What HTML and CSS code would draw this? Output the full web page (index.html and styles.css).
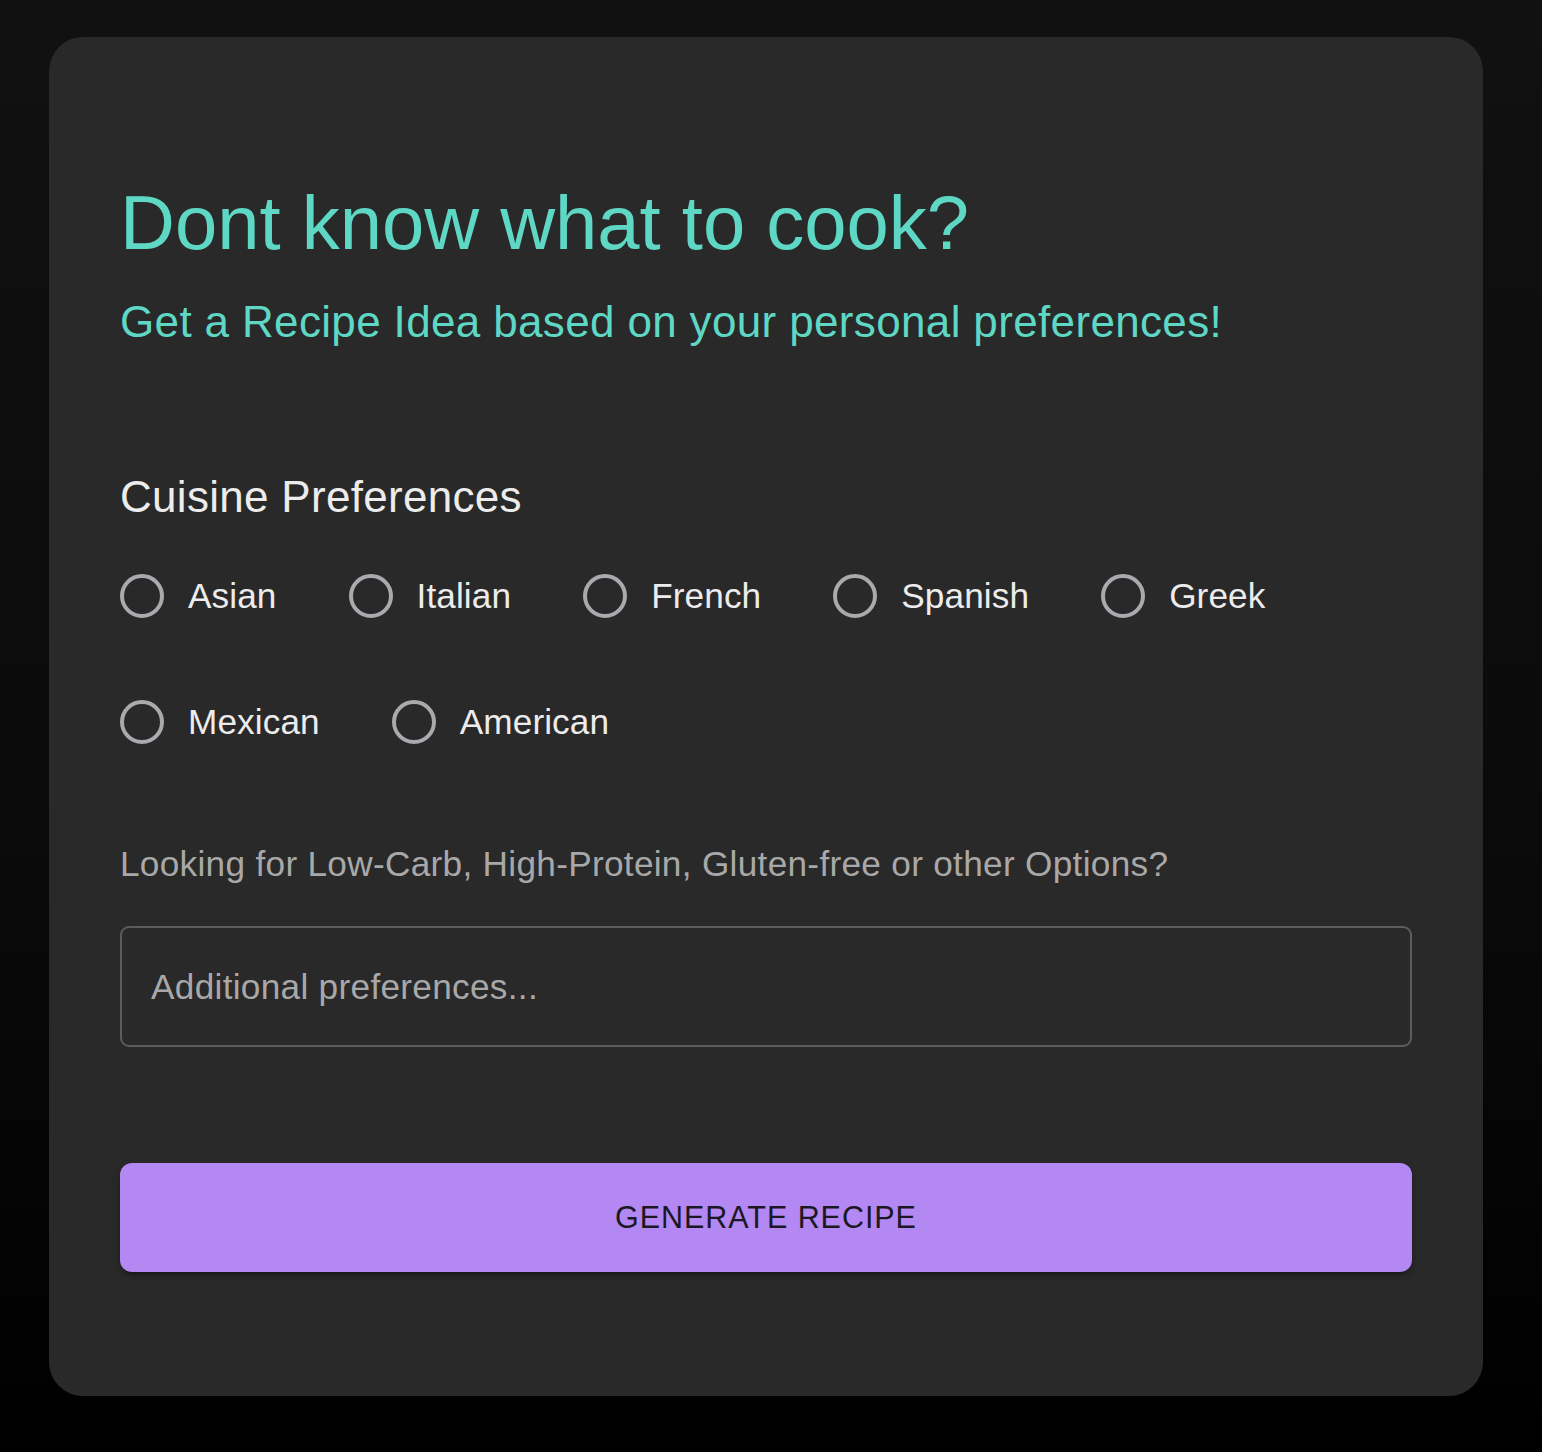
FILE: index.html
```html
<!DOCTYPE html>
<html lang="en">
<head>
<meta charset="utf-8">
<title>Recipe Idea</title>
<link rel="stylesheet" href="styles.css">
</head>
<body>
<main class="card">
  <h1 class="title">Dont know what to cook?</h1>
  <p class="subtitle">Get a Recipe Idea based on your personal preferences!</p>

  <h2 class="section-title">Cuisine Preferences</h2>
  <div class="radio-group">
    <label class="radio-item"><input type="radio" name="cuisine" class="radio"><span class="radio-label">Asian</span></label>
    <label class="radio-item"><input type="radio" name="cuisine" class="radio"><span class="radio-label">Italian</span></label>
    <label class="radio-item"><input type="radio" name="cuisine" class="radio"><span class="radio-label">French</span></label>
    <label class="radio-item"><input type="radio" name="cuisine" class="radio"><span class="radio-label">Spanish</span></label>
    <label class="radio-item"><input type="radio" name="cuisine" class="radio"><span class="radio-label">Greek</span></label>
    <label class="radio-item"><input type="radio" name="cuisine" class="radio"><span class="radio-label">Mexican</span></label>
    <label class="radio-item"><input type="radio" name="cuisine" class="radio"><span class="radio-label">American</span></label>
  </div>

  <p class="hint">Looking for Low-Carb, High-Protein, Gluten-free or other Options?</p>
  <input class="text-input" type="text" placeholder="Additional preferences...">

  <button class="generate" type="button">Generate Recipe</button>
</main>
</body>
</html>
```

FILE: styles.css
```css
html, body {
  margin: 0;
  padding: 0;
}

body {
  min-height: 1452px;
  background: linear-gradient(180deg, #111111 0%, #0a0a0a 60%, #000000 100%);
  font-family: "Liberation Sans", Arial, Helvetica, sans-serif;
  padding: 37px 0 0 49px;
  box-sizing: border-box;
}

.card {
  width: 1434px;
  box-sizing: border-box;
  background: #292929;
  border-radius: 34px;
  padding: 139px 71px 124px 71px;
  display: flex;
  flex-direction: column;
}

.title {
  margin: 0;
  font-size: 76px;
  line-height: 94px;
  font-weight: 400;
  color: #5fd7c5;
  letter-spacing: 0;
}

.subtitle {
  margin: 17px 0 0 0;
  font-size: 44px;
  line-height: 70px;
  font-weight: 400;
  color: #5fd7c5;
  letter-spacing: 0.35px;
}

.section-title {
  margin: 105px 0 0 0;
  font-size: 44px;
  line-height: 70px;
  font-weight: 400;
  color: #ececec;
  letter-spacing: 0.3px;
}

.radio-group {
  margin-top: 24px;
  display: flex;
  flex-wrap: wrap;
  column-gap: 72px;
  row-gap: 46px;
}

.radio-item {
  display: flex;
  align-items: center;
  height: 80px;
  gap: 24px;
  cursor: pointer;
}

.radio {
  appearance: none;
  -webkit-appearance: none;
  margin: 0;
  width: 44px;
  height: 44px;
  box-sizing: border-box;
  border: 4.4px solid #a9a9ae;
  border-radius: 50%;
  background: transparent;
}

.radio-label {
  font-size: 35.2px;
  line-height: 53px;
  color: #ececec;
  letter-spacing: 0.1px;
  position: relative;
  top: -1px;
}

.hint {
  margin: 75px 0 0 0;
  font-size: 35.2px;
  line-height: 53px;
  color: #a8a8a8;
  letter-spacing: 0.3px;
}

.text-input {
  margin-top: 36px;
  height: 121px;
  box-sizing: border-box;
  border: 2px solid #5c5c5c;
  border-radius: 9px;
  background: transparent;
  padding: 0 29px;
  font-family: inherit;
  font-size: 35.2px;
  letter-spacing: 0.3px;
  color: #ececec;
  outline: none;
}

.text-input::placeholder {
  color: #a8a8a8;
  opacity: 1;
}

.generate {
  margin-top: 116px;
  height: 109px;
  border: none;
  border-radius: 12px;
  background: #b388f3;
  color: #1b1823;
  font-family: inherit;
  font-size: 30.5px;
  font-weight: 400;
  letter-spacing: 0.95px;
  text-transform: uppercase;
  box-shadow: 0 6px 3px -4px rgba(0, 0, 0, 0.2), 0 4px 4px 0 rgba(0, 0, 0, 0.14), 0 2px 10px 0 rgba(0, 0, 0, 0.12);
  cursor: pointer;
}
```
